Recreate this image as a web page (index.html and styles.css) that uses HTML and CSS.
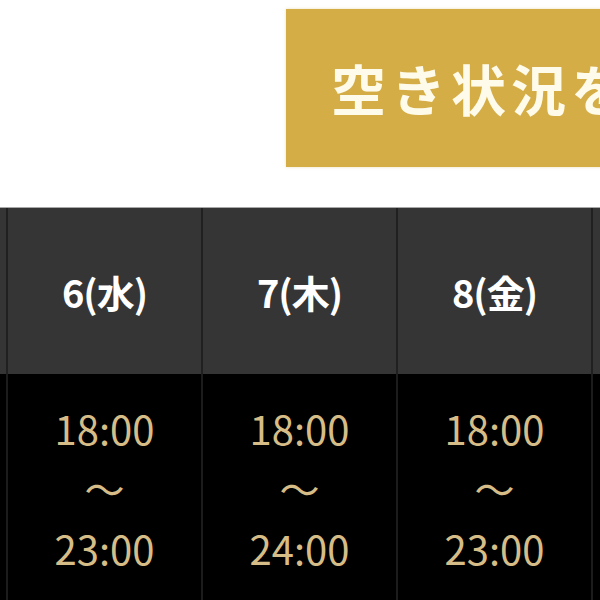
FILE: index.html
```html
<!DOCTYPE html>
<html lang="ja">
<head>
<meta charset="utf-8">
<link rel="stylesheet" href="styles.css">
</head>
<body>
<div class="page">
  <div class="top">
    <div class="btn">空き状況を確認する</div>
  </div>
  <div class="table">
    <div class="row head">
      <div class="cell edge"></div>
      <div class="cell">6(水)</div>
      <div class="cell">7(木)</div>
      <div class="cell">8(金)</div>
      <div class="cell edge-r"></div>
    </div>
    <div class="row body">
      <div class="cell edge"></div>
      <div class="cell">18:00<br>～<br>23:00</div>
      <div class="cell">18:00<br>～<br>24:00</div>
      <div class="cell">18:00<br>～<br>23:00</div>
      <div class="cell edge-r"></div>
    </div>
  </div>
</div>
</body>
</html>
```
FILE: styles.css
```css
html, body {
  margin: 0;
  padding: 0;
  background: #fff;
  width: 600px;
  height: 600px;
  overflow: hidden;
  font-family: "Noto Sans CJK JP", "Noto Sans", sans-serif;
}
.page {
  width: 600px;
  height: 600px;
  overflow: hidden;
}
.top {
  height: 207px;
  padding-top: 9px;
  padding-left: 286px;
  box-sizing: border-box;
}
.btn {
  width: 360px;
  height: 158px;
  box-sizing: border-box;
  background: #d4ad47;
  color: #fffbea;
  font-size: 55px;
  font-weight: 700;
  letter-spacing: 5px;
  padding-left: 45px;
  padding-bottom: 2px;
  display: flex;
  align-items: center;
  white-space: nowrap;
  overflow: hidden;
  box-shadow: 0 0 3px rgba(212, 173, 71, 0.35);
}
.table {
  border-top: 1px solid #a8a8a8;
  width: 800px;
}
.row {
  display: flex;
  gap: 2px;
}
.cell {
  width: 193px;
  flex: none;
  text-align: center;
}
.cell.edge { width: 6px; }
.cell.edge-r { width: 100px; }
.head {
  background: #202020;
  height: 166px;
}
.head .cell {
  background: #353535;
  color: #fff;
  font-size: 38px;
  font-weight: 700;
  display: flex;
  align-items: center;
  justify-content: center;
  letter-spacing: -1px;
}
.body {
  background: #1c1c1c;
  height: 240px;
}
.body .cell {
  background: #000;
  color: #d6bd88;
  font-size: 40px;
  line-height: 60px;
  padding-top: 24px;
  box-sizing: border-box;
}
```
